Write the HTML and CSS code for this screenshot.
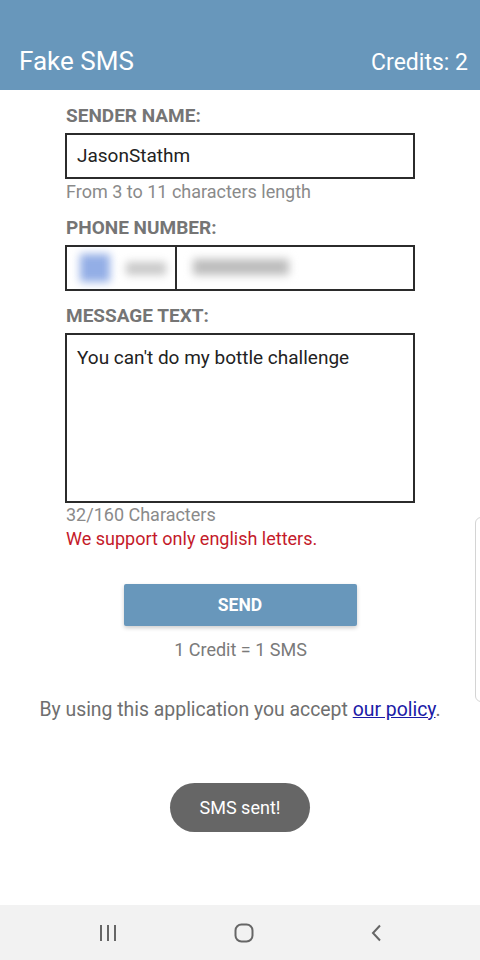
FILE: index.html
```html
<!DOCTYPE html>
<html>
<head>
    <title>Fake SMS</title>
    <link rel="stylesheet" href="styles.css">
</head>
<body>
    <div class="toolbar">
        <span class="app-title">Fake SMS</span>
        <span class="credits">Credits: 2</span>
    </div>

    <div class="container">
        <label class="field-label">SENDER NAME:</label>
        <div class="text-box">JasonStathm</div>
        <p class="hint">From 3 to 11 characters length</p>

        <label class="field-label">PHONE NUMBER:</label>
        <div class="phone-box">
            <div class="country">
                <span class="flag"></span>
                <span class="code"></span>
            </div>
            <div class="number">
                <span class="digits"></span>
            </div>
        </div>

        <label class="field-label">MESSAGE TEXT:</label>
        <div class="message-box">You can't do my bottle challenge</div>
        <p class="counter">32/160 Characters</p>
        <p class="warning">We support only english letters.</p>

        <div class="send-row">
            <button class="send-btn">SEND</button>
        </div>
        <p class="price">1 Credit = 1 SMS</p>
    </div>

    <p class="policy">By using this application you accept <a href="#">our policy</a>.</p>

    <!-- toast shown after sending -->
    <div class="toast">SMS sent!</div>

    <!-- edge panel handle -->
    <div class="edge-handle"></div>

    <div class="nav-bar">
        <svg width="20" height="18" viewBox="0 0 20 18">
            <path d="M3 1v16M10 1v16M17 1v16" stroke="#666" stroke-width="2" fill="none"/>
        </svg>
        <svg width="20" height="20" viewBox="0 0 20 20">
            <rect x="1.5" y="1.5" width="17" height="17" rx="6" stroke="#666" stroke-width="2" fill="none"/>
        </svg>
        <svg width="14" height="18" viewBox="0 0 14 18">
            <path d="M10 1.5L3 9l7 7.5" stroke="#666" stroke-width="2" fill="none"/>
        </svg>
    </div>
</body>
</html>
```

FILE: styles.css
```css
body {
    font-family: Roboto, "Liberation Sans", sans-serif;
    background-color: #fff;
    margin: 0;
    padding: 0;
    width: 480px;
    height: 960px;
    display: flex;
    flex-direction: column;
    position: relative;
    overflow: hidden;
}
.toolbar {
    height: 90px;
    background-color: #6897bb;
    color: #fff;
    display: flex;
    justify-content: space-between;
    align-items: flex-end;
    padding: 0 12px 14px 19px;
    box-sizing: border-box;
}
.app-title {
    font-size: 26px;
}
.credits {
    font-size: 23px;
}
.container {
    width: 350px;
    margin: 0 auto;
    padding-top: 16px;
}
.field-label {
    display: block;
    font-weight: bold;
    font-size: 19px;
    line-height: 20px;
    color: #757575;
    margin: 0 0 7px 1px;
}
.text-box {
    height: 46px;
    border: 2px solid #2b2b2b;
    box-sizing: border-box;
    padding: 0 10px;
    font-size: 19px;
    line-height: 42px;
    color: #222;
}
.hint {
    font-size: 18px;
    line-height: 20px;
    color: #8a8a8a;
    margin: 3px 0 16px 1px;
}
.phone-box {
    height: 46px;
    border: 2px solid #2b2b2b;
    box-sizing: border-box;
    display: flex;
    margin-bottom: 15px;
}
.country {
    width: 110px;
    box-sizing: border-box;
    border-right: 2px solid #2b2b2b;
    display: flex;
    align-items: center;
    padding-left: 13px;
    gap: 16px;
}
.flag {
    width: 30px;
    height: 28px;
    background-color: #93aee6;
    filter: blur(4px);
}
.code {
    width: 40px;
    height: 13px;
    background-color: #c8c8c8;
    filter: blur(4px);
}
.number {
    flex: 1;
    padding: 12px 0 0 16px;
}
.digits {
    display: block;
    width: 96px;
    height: 16px;
    background-color: #bdbdbd;
    filter: blur(4px);
}
.message-box {
    height: 170px;
    border: 2px solid #2b2b2b;
    box-sizing: border-box;
    padding: 11px 10px;
    font-size: 19px;
    line-height: 24px;
    color: #222;
}
.counter,
.warning {
    font-size: 18px;
    line-height: 24px;
    margin: 0 0 0 1px;
    color: #8a8a8a;
}
.warning {
    color: #c41a2a;
}
.send-row {
    display: flex;
    justify-content: center;
    margin-top: 33px;
}
.send-btn {
    width: 233px;
    height: 42px;
    background-color: #6897bb;
    color: #fff;
    border: none;
    border-radius: 2px;
    font-family: Roboto, "Liberation Sans", sans-serif;
    font-weight: bold;
    font-size: 17.5px;
    box-shadow: 0px 2px 4px rgba(0, 0, 0, 0.2);
}
.price {
    text-align: center;
    font-size: 18px;
    line-height: 20px;
    color: #7a7a7a;
    margin: 14px 0 0 1px;
}
.policy {
    text-align: center;
    font-size: 19.4px;
    line-height: 20px;
    color: #6f6f6f;
    margin: 40px 0 0 0;
}
.policy a {
    color: #1a1aa6;
}
.toast {
    position: absolute;
    top: 783px;
    left: 170px;
    width: 140px;
    height: 49px;
    border-radius: 25px;
    background-color: #666;
    color: #fff;
    font-size: 18px;
    display: flex;
    align-items: center;
    justify-content: center;
}
.edge-handle {
    position: absolute;
    top: 517px;
    left: 475px;
    width: 10px;
    height: 183px;
    border: 1px solid #d4d4d4;
    border-radius: 6px;
}
.nav-bar {
    margin-top: auto;
    height: 55px;
    background-color: #f2f2f2;
    display: flex;
    align-items: center;
    justify-content: space-between;
    padding: 0 96px 0 98px;
}
```
